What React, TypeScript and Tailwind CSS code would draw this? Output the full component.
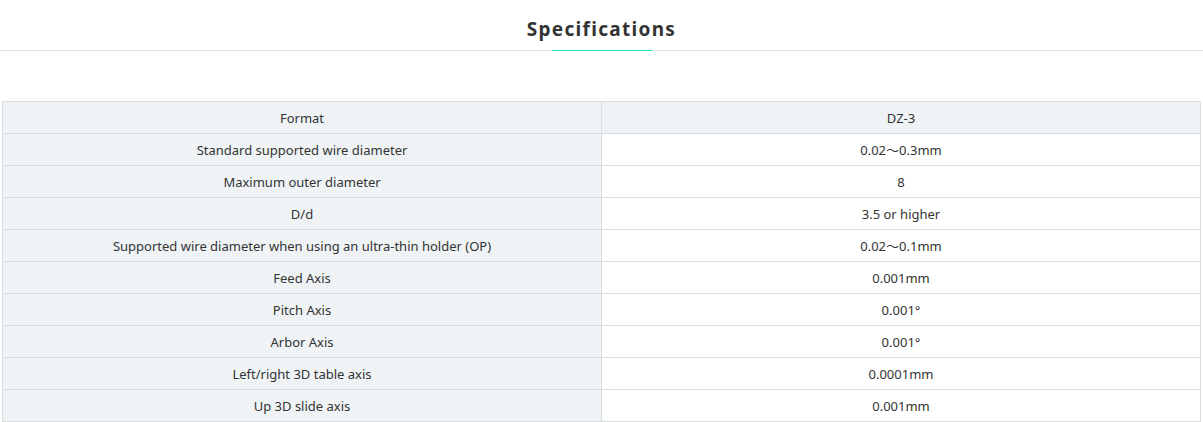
const rows: [string, string][] = [
  ['Format', 'DZ-3'],
  ['Standard supported wire diameter', '0.02～0.3mm'],
  ['Maximum outer diameter', '8'],
  ['D/d', '3.5 or higher'],
  ['Supported wire diameter when using an ultra-thin holder (OP)', '0.02～0.1mm'],
  ['Feed Axis', '0.001mm'],
  ['Pitch Axis', '0.001°'],
  ['Arbor Axis', '0.001°'],
  ['Left/right 3D table axis', '0.0001mm'],
  ['Up 3D slide axis', '0.001mm'],
]

export default function App() {
  return (
    <div className="w-[1203px] h-[422px] bg-white font-['Noto_Sans','Noto_Sans_CJK_JP',sans-serif] text-[#333]">
      <div className="relative h-[51px] border-b border-[#dde3e2] flex justify-center">
        <h2 className="pt-[16px] text-[19px] leading-[26px] font-bold tracking-[1.3px] text-[#333]">
          Specifications
        </h2>
        <div className="absolute left-[552px] bottom-[-1px] w-[100px] h-[1px] bg-[#14e0bd]" />
      </div>

      <div className="pt-[50px] px-[2px]">
        <table className="w-[1199px] border-collapse text-[13px] text-[#333] table-fixed">
          <tbody>
            {rows.map(([label, value], i) => (
              <tr key={label} className="h-[32px]">
                <td className="w-[599px] border border-[#d8dedd] bg-[#eff3f6] text-center p-0 pt-[2px]">
                  {label}
                </td>
                <td
                  className={`border border-[#d8dedd] text-center p-0 pt-[2px] ${
                    i === 0 ? 'bg-[#eff3f6]' : 'bg-white'
                  }`}
                >
                  {value}
                </td>
              </tr>
            ))}
          </tbody>
        </table>
      </div>
    </div>
  )
}
